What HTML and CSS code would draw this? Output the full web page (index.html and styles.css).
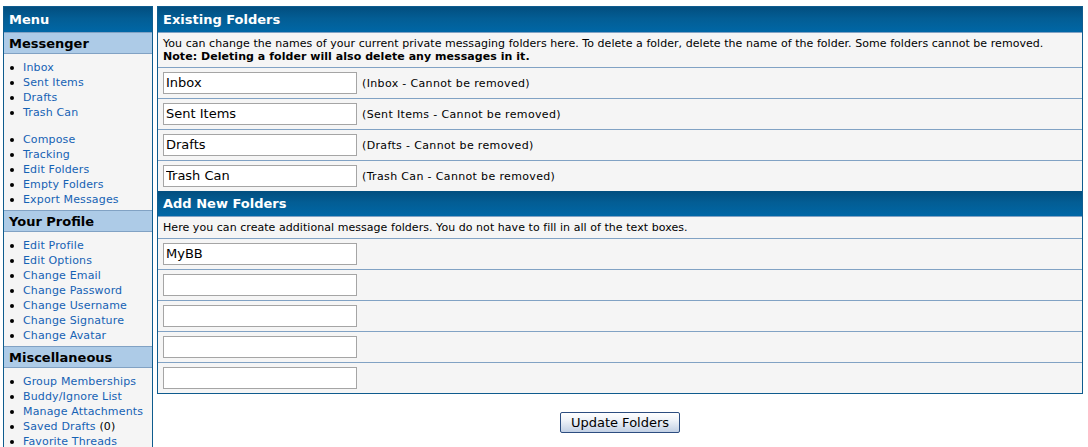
FILE: index.html
```html
<!DOCTYPE html>
<html>
<head>
<meta charset="utf-8">
<title>Edit Folders</title>
<link rel="stylesheet" href="styles.css">
</head>
<body>
<div class="page">
  <aside class="sidebar">
    <div class="thead">Menu</div>
    <div class="tcat">Messenger</div>
    <div class="navbody">
      <ul class="nav">
        <li><span><a href="#">Inbox</a></span></li>
        <li><span><a href="#">Sent Items</a></span></li>
        <li><span><a href="#">Drafts</a></span></li>
        <li><span><a href="#">Trash Can</a></span></li>
      </ul>
      <ul class="nav nav-gap">
        <li><span><a href="#">Compose</a></span></li>
        <li><span><a href="#">Tracking</a></span></li>
        <li><span><a href="#">Edit Folders</a></span></li>
        <li><span><a href="#">Empty Folders</a></span></li>
        <li><span><a href="#">Export Messages</a></span></li>
      </ul>
    </div>
    <div class="tcat">Your Profile</div>
    <div class="navbody">
      <ul class="nav">
        <li><span><a href="#">Edit Profile</a></span></li>
        <li><span><a href="#">Edit Options</a></span></li>
        <li><span><a href="#">Change Email</a></span></li>
        <li><span><a href="#">Change Password</a></span></li>
        <li><span><a href="#">Change Username</a></span></li>
        <li><span><a href="#">Change Signature</a></span></li>
        <li><span><a href="#">Change Avatar</a></span></li>
      </ul>
    </div>
    <div class="tcat">Miscellaneous</div>
    <div class="navbody">
      <ul class="nav">
        <li><span><a href="#">Group Memberships</a></span></li>
        <li><span><a href="#">Buddy/Ignore List</a></span></li>
        <li><span><a href="#">Manage Attachments</a></span></li>
        <li><span><a href="#">Saved Drafts</a> (0)</span></li>
        <li><span><a href="#">Favorite Threads</a></span></li>
      </ul>
    </div>
  </aside>

  <main class="content">
    <div class="tborder">
      <div class="thead">Existing Folders</div>
      <div class="trow desc">You can change the names of your current private messaging folders here. To delete a folder, delete the name of the folder. Some folders cannot be removed.<br><strong>Note: Deleting a folder will also delete any messages in it.</strong></div>
      <div class="trow field"><input class="textbox" type="text" value="Inbox"><span class="note">(Inbox - Cannot be removed)</span></div>
      <div class="trow field"><input class="textbox" type="text" value="Sent Items"><span class="note">(Sent Items - Cannot be removed)</span></div>
      <div class="trow field"><input class="textbox" type="text" value="Drafts"><span class="note">(Drafts - Cannot be removed)</span></div>
      <div class="trow field"><input class="textbox" type="text" value="Trash Can"><span class="note">(Trash Can - Cannot be removed)</span></div>
      <div class="thead">Add New Folders</div>
      <div class="trow desc">Here you can create additional message folders. You do not have to fill in all of the text boxes.</div>
      <div class="trow field"><input class="textbox" type="text" value="MyBB"></div>
      <div class="trow field"><input class="textbox" type="text" value=""></div>
      <div class="trow field"><input class="textbox" type="text" value=""></div>
      <div class="trow field"><input class="textbox" type="text" value=""></div>
      <div class="trow field"><input class="textbox" type="text" value=""></div>
    </div>
    <div class="actions">
      <button class="button" type="submit">Update Folders</button>
    </div>
  </main>
</div>
</body>
</html>
```

FILE: styles.css
```css
html, body {
  margin: 0;
  padding: 0;
  background: #ffffff;
}

body {
  font-family: "DejaVu Sans", Verdana, sans-serif;
  font-size: 13px;
  color: #000;
}

.page {
  display: flex;
  align-items: flex-start;
  gap: 4px;
  padding: 6px 5px 0 3px;
}

.sidebar {
  flex: none;
  width: 150px;
  box-sizing: border-box;
  border: 1px solid #0f5c8e;
  background: #f5f5f5;
}

.content {
  flex: 1;
  min-width: 0;
}

.tborder {
  border: 1px solid #0f5c8e;
  background: #f5f5f5;
}

.thead {
  background: linear-gradient(to bottom, #024e7f 0%, #035d94 45%, #0067a6 100%);
  color: #fff;
  font-weight: bold;
  font-size: 13px;
  line-height: 15px;
  padding: 5px 5px;
}

.tcat {
  background: #adcbe7;
  border-top: 1px solid #81a2c4;
  border-bottom: 1px solid #81a2c4;
  color: #000;
  font-weight: bold;
  font-size: 13px;
  line-height: 13px;
  padding: 4px 5px 3px;
}

.navbody {
  padding: 6px 0 3px;
}

.nav {
  list-style: none;
  margin: 0;
  padding: 0;
}

.nav-gap {
  margin-top: 12px;
}

.nav li {
  display: flex;
  align-items: center;
  font-size: 11px;
  line-height: 15px;
  letter-spacing: 0.15px;
}

.nav li::before {
  content: "";
  flex: none;
  width: 4px;
  height: 4px;
  border-radius: 50%;
  background: #000;
  margin: 0 9px 0 6px;
}

a {
  color: #1662b4;
  text-decoration: none;
}

.trow {
  border-top: 1px solid #81a2c4;
  padding: 4px 5px;
  font-size: 11px;
  line-height: 13px;
}

.desc {
  letter-spacing: 0.05px;
}

.field {
  display: flex;
  align-items: center;
  gap: 5px;
}

.textbox {
  width: 194px;
  height: 22px;
  box-sizing: border-box;
  margin: 0;
  padding: 0 3px 1px 2px;
  border: 1px solid #a5a5a5;
  background: #fff;
  font-family: "DejaVu Sans", Verdana, sans-serif;
  font-size: 13px;
  color: #000;
  outline: none;
}

.note {
  font-size: 11px;
  letter-spacing: 0.35px;
}

.actions {
  display: flex;
  justify-content: center;
  margin-top: 18px;
}

.button {
  width: 120px;
  height: 21px;
  box-sizing: border-box;
  padding: 0;
  border: 1px solid #2c4d80;
  border-radius: 2px;
  background: linear-gradient(to bottom, #ffffff 0%, #eef2f8 40%, #c2d0e4 100%);
  font-family: "DejaVu Sans", Verdana, sans-serif;
  font-size: 13px;
  color: #000;
  cursor: pointer;
}
```
